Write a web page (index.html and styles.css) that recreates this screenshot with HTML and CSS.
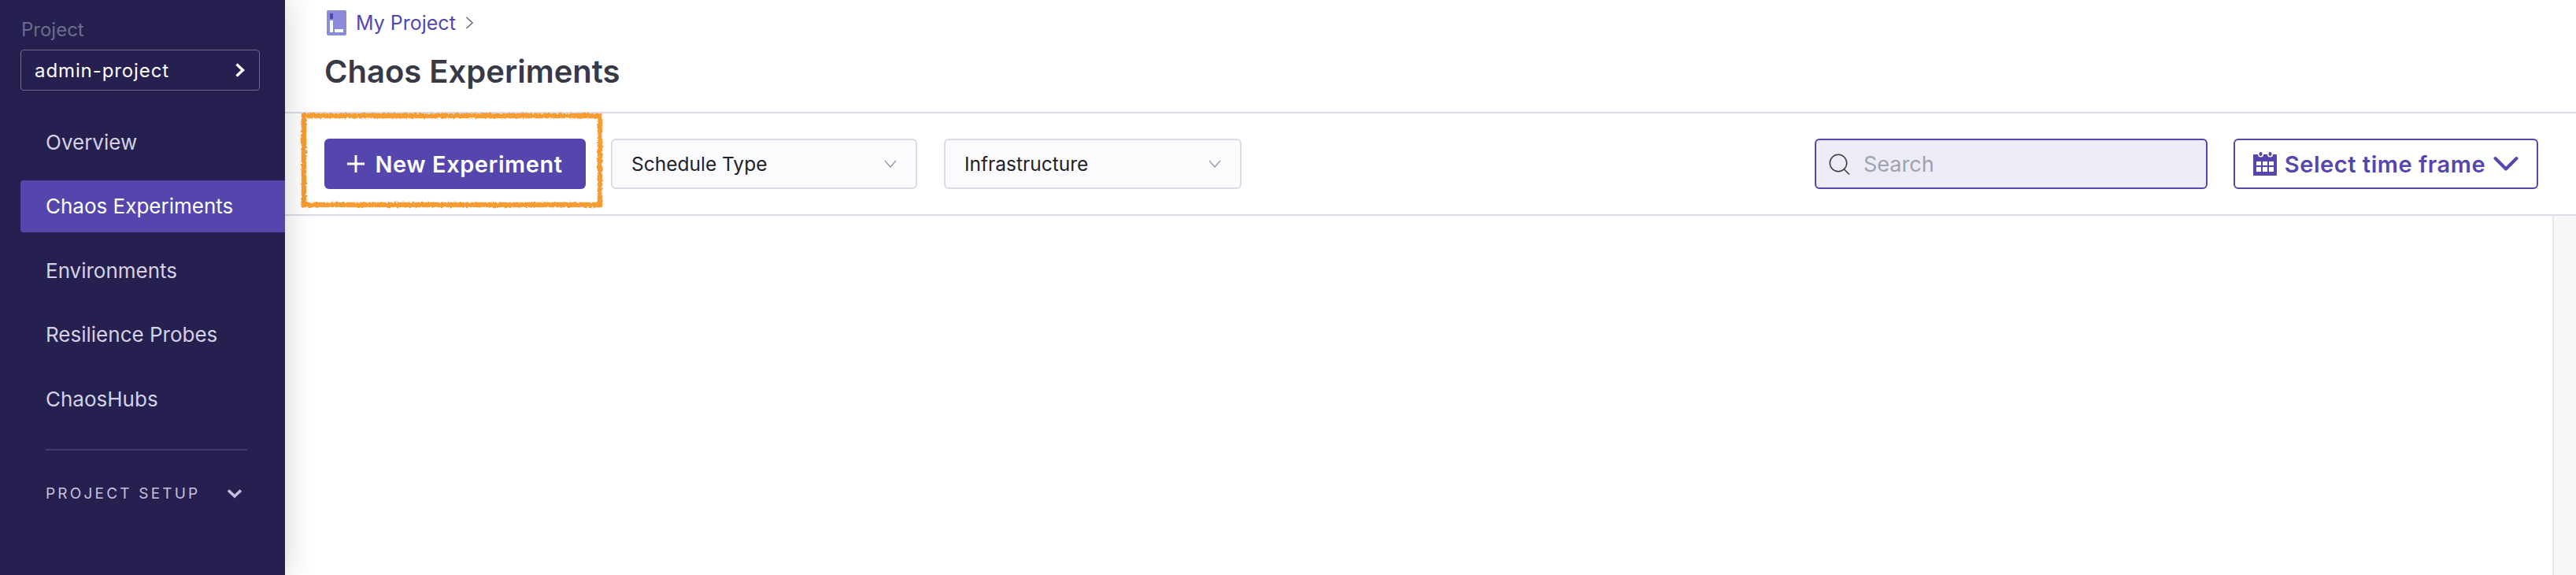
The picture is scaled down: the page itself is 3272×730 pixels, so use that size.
FILE: index.html
```html
<!DOCTYPE html>
<html lang="en">
<head>
    <meta charset="UTF-8">
    <title>Chaos Experiments</title>
    <link rel="stylesheet" href="styles.css">
</head>
<body>
    <div class="app">
        <aside class="sidebar">
            <div class="project-label">Project</div>
            <div class="project-select">
                <span>admin-project</span>
                <svg width="14" height="20" viewBox="0 0 14 20"><path d="M2.5 2.5 10.5 10 2.5 17.5" fill="none" stroke="#fff" stroke-width="3.4"/></svg>
            </div>
            <nav class="nav">
                <a class="nav-item">Overview</a>
                <a class="nav-item active">Chaos Experiments</a>
                <a class="nav-item">Environments</a>
                <a class="nav-item">Resilience Probes</a>
                <a class="nav-item">ChaosHubs</a>
            </nav>
            <div class="nav-divider"></div>
            <div class="setup">
                <span>PROJECT SETUP</span>
                <svg width="20" height="13" viewBox="0 0 20 13"><path d="M2 2.5 10 10 18 2.5" fill="none" stroke="#c5c1da" stroke-width="3.6"/></svg>
            </div>
        </aside>
        <main class="main">
            <header class="page-header">
                <div class="breadcrumb">
                    <svg width="25" height="32" viewBox="0 0 25 32">
                        <rect width="25" height="32" rx="2" fill="#8a8cdb"/>
                        <rect x="4" y="4" width="4" height="7" fill="#5546ae"/>
                        <rect x="4" y="13" width="4" height="15" fill="#fff"/>
                        <rect x="10" y="24" width="11" height="4" fill="#fff"/>
                    </svg>
                    <span class="crumb-text">My Project</span>
                    <svg width="11" height="16" viewBox="0 0 11 16"><path d="M1.5 1 9 8 1.5 15" fill="none" stroke="#6b6d85" stroke-width="1.6"/></svg>
                </div>
                <h1 class="page-title">Chaos Experiments</h1>
            </header>
            <div class="toolbar">
                <div class="new-wrap">
                    <button class="btn-new">
                        <svg width="24" height="24" viewBox="0 0 24 24"><path d="M12 0v24M0 12h24" stroke="#fff" stroke-width="3.2"/></svg>
                        New Experiment
                    </button>
                    <svg class="scribble" width="392" height="130" viewBox="0 0 392 130">
                        <filter id="rough"><feTurbulence type="fractalNoise" baseFrequency="0.35" numOctaves="2" seed="4"/><feDisplacementMap in="SourceGraphic" scale="4"/></filter>
                        <rect x="8" y="7" width="376" height="113" fill="none" stroke="#f59c30" stroke-width="6.5" filter="url(#rough)"/>
                    </svg>
                </div>
                <div class="dropdown dd-schedule">
                    <span>Schedule Type</span>
                    <svg width="16" height="10" viewBox="0 0 16 10"><path d="M1 1 8 9 15 1" fill="none" stroke="#9a9ab0" stroke-width="1.5"/></svg>
                </div>
                <div class="dropdown dd-infra">
                    <span>Infrastructure</span>
                    <svg width="16" height="10" viewBox="0 0 16 10"><path d="M1 1 8 9 15 1" fill="none" stroke="#9a9ab0" stroke-width="1.5"/></svg>
                </div>
                <div class="search">
                    <svg width="27" height="27" viewBox="0 0 27 27"><circle cx="12" cy="12" r="10.7" fill="none" stroke="#383946" stroke-width="1.5"/><path d="M19.5 20 26 26.500" stroke="#383946" stroke-width="1.5"/></svg>
                    <span>Search</span>
                </div>
                <button class="btn-time">
                    <svg width="30" height="30" viewBox="0 0 30 30">
                        <path fill="#5546ae" fill-rule="evenodd" d="M1 3h5a3.500 3.500 0 0 0 7 0h5a3.500 3.500 0 0 0 7 0h4a1 1 0 0 1 1 1v25a1 1 0 0 1-1 1H1a1 1 0 0 1-1-1V4a1 1 0 0 1 1-1ZM4 12v5h6v-5ZM12 12v5h6v-5ZM20 12v5h6v-5ZM4 19v6h6v-6ZM12 19v6h6v-6ZM20 19v6h6v-6Z"/>
                        <rect x="7.500" y="0" width="4" height="5" rx="2" fill="#5546ae"/>
                        <rect x="19.500" y="0" width="4" height="5" rx="2" fill="#5546ae"/>
                    </svg>
                    <span>Select time frame</span>
                    <svg width="32" height="20" viewBox="0 0 32 20"><path d="M2.500 3 16 16.500 29.500 3" fill="none" stroke="#5546ae" stroke-width="4" stroke-linecap="round" stroke-linejoin="round"/></svg>
                </button>
            </div>
            <div class="content">
                <div class="content-body"></div>
                <div class="scrollbar"></div>
            </div>
        </main>
    </div>
</body>
</html>
```

FILE: styles.css
```css
* {
    box-sizing: border-box;
}
html, body {
    margin: 0;
    padding: 0;
    height: 100%;
    overflow: hidden;
    background-color: #fff;
    font-family: Inter, 'Noto Sans', sans-serif;
}
.app {
    display: flex;
    height: 730px;
}
.sidebar {
    position: relative;
    z-index: 2;
    width: 362px;
    flex: none;
    background-color: #252050;
    padding: 26px 0 0 26px;
    box-shadow: 0 0 36px rgba(40, 40, 60, 0.22);
}
.project-label {
    font-size: 24px;
    line-height: 24px;
    color: #6d6c8a;
    margin-left: 1px;
}
.project-select {
    display: flex;
    align-items: center;
    justify-content: space-between;
    width: 304px;
    height: 52px;
    margin-top: 13px;
    padding: 0 17px;
    border: 1.500px solid #6e6c88;
    border-radius: 4px;
    color: #fff;
    font-size: 24px;
    letter-spacing: 0.9px;
}
.nav {
    display: flex;
    flex-direction: column;
    margin-top: 32px;
}
.nav-item {
    display: flex;
    align-items: center;
    height: 66px;
    margin-bottom: 15.500px;
    padding-left: 32px;
    border-radius: 4px 0 0 4px;
    font-size: 26px;
    color: #d3d1e3;
}
.nav-item.active {
    background-color: #5546ae;
    color: #fff;
}
.nav-divider {
    width: 256px;
    height: 2px;
    margin: 15px 0 0 32px;
    background-color: #3f3a68;
}
.setup {
    display: flex;
    align-items: center;
    justify-content: space-between;
    width: 250px;
    margin: 43px 0 0 32px;
    color: #c5c1da;
    font-size: 19px;
    letter-spacing: 3.200px;
}
.main {
    flex: 1;
    display: flex;
    flex-direction: column;
    min-width: 0;
}
.page-header {
    height: 142px;
    padding: 13px 0 0 53px;
}
.breadcrumb {
    display: flex;
    align-items: center;
    gap: 12px;
}
.crumb-text {
    font-size: 25px;
    color: #5546ae;
}
.page-title {
    margin: 22px 0 0 -3px;
    font-size: 40px;
    line-height: 48px;
    font-weight: 600;
    color: #383946;
}
.toolbar {
    display: flex;
    align-items: center;
    height: 132px;
    padding: 0 48px 0 50px;
    border-top: 2px solid #dcdbe6;
    border-bottom: 2px solid #dcdbe6;
}
.new-wrap {
    position: relative;
    margin-right: 32px;
}
.btn-new {
    display: flex;
    align-items: center;
    justify-content: center;
    gap: 13px;
    width: 332px;
    height: 64px;
    border: 0;
    border-radius: 6px;
    background-color: #5546ae;
    color: #fff;
    font: 600 29px Inter, sans-serif;
    letter-spacing: 0.55px;
}
.btn-new svg {
    width: 22px;
    height: 22px;
}
.scribble {
    position: absolute;
    left: -34px;
    top: -36px;
    pointer-events: none;
}
.dropdown {
    display: flex;
    align-items: center;
    justify-content: space-between;
    height: 64px;
    padding: 0 24px 0 24px;
    border: 2px solid #dcdbe6;
    border-radius: 6px;
    background-color: #fbfbfe;
    font-size: 24.500px;
    color: #22222a;
}
.dd-schedule {
    width: 389px;
    margin-right: 34px;
}
.dd-infra {
    width: 378px;
}
.search {
    display: flex;
    align-items: center;
    gap: 17px;
    width: 499px;
    height: 64px;
    margin-left: auto;
    padding-left: 16px;
    border: 2px solid #5546ae;
    border-radius: 6px;
    background-color: #edebf6;
    font-size: 27px;
    color: #9ea3b0;
}
.btn-time {
    display: flex;
    align-items: center;
    justify-content: center;
    gap: 10px;
    width: 387px;
    height: 64px;
    margin-left: 33px;
    padding: 0;
    border: 2px solid #5546ae;
    border-radius: 6px;
    background-color: #fff;
    color: #5546ae;
    font: 600 29px Inter, sans-serif;
    letter-spacing: 0.55px;
}
.content {
    flex: 1;
    display: flex;
}
.content-body {
    flex: 1;
}
.scrollbar {
    width: 30px;
    background-color: #f8f8f9;
    border-left: 2px solid #e8e8ea;
}
```
